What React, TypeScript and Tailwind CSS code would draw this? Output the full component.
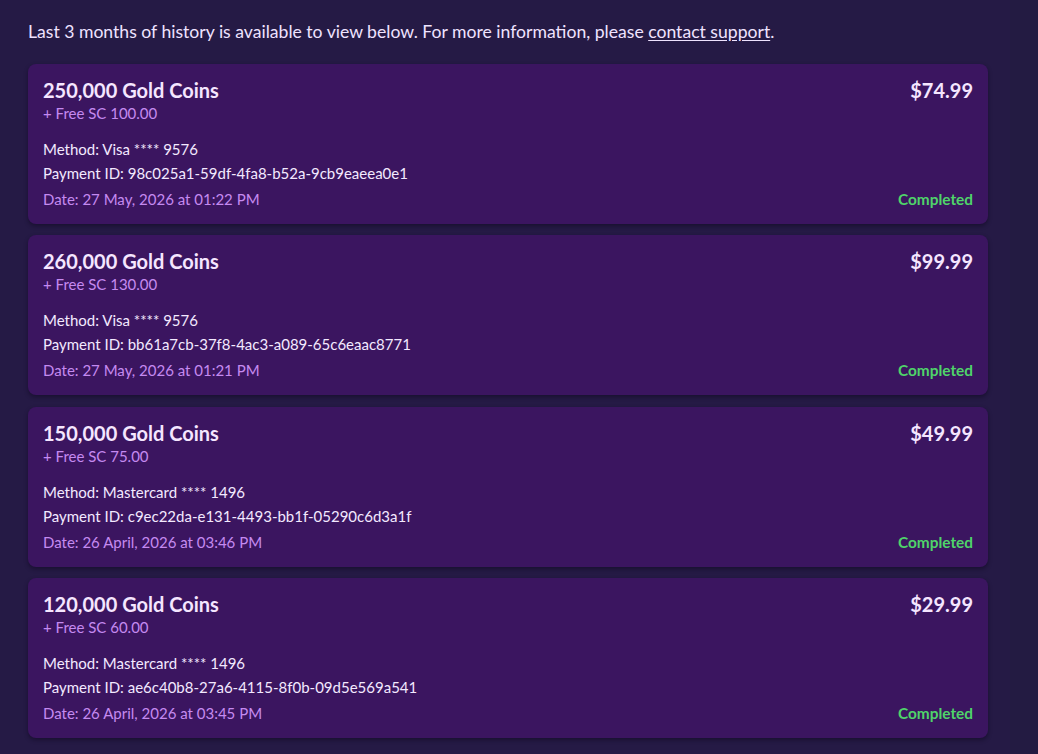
const purchases = [
	{
		coins: '250,000',
		sc: '100.00',
		price: '$74.99',
		method: 'Visa **** 9576',
		id: '98c025a1-59df-4fa8-b52a-9cb9eaeea0e1',
		date: '27 May, 2026 at 01:22 PM',
	},
	{
		coins: '260,000',
		sc: '130.00',
		price: '$99.99',
		method: 'Visa **** 9576',
		id: 'bb61a7cb-37f8-4ac3-a089-65c6eaac8771',
		date: '27 May, 2026 at 01:21 PM',
	},
	{
		coins: '150,000',
		sc: '75.00',
		price: '$49.99',
		method: 'Mastercard **** 1496',
		id: 'c9ec22da-e131-4493-bb1f-05290c6d3a1f',
		date: '26 April, 2026 at 03:46 PM',
	},
	{
		coins: '120,000',
		sc: '60.00',
		price: '$29.99',
		method: 'Mastercard **** 1496',
		id: 'ae6c40b8-27a6-4115-8f0b-09d5e569a541',
		date: '26 April, 2026 at 03:45 PM',
	},
];

function PurchaseCard({ p }: { p: (typeof purchases)[number] }) {
	return (
		<div className="h-[160px] rounded-lg bg-[#3b1560] px-[15px] pt-[14px] shadow-[0_2px_4px_rgba(10,5,25,0.45)]">
			<div className="flex items-start justify-between">
				<div>
					<h3 className="text-[20px] leading-6 font-bold text-[#f5e6ff]">{p.coins} Gold Coins</h3>
					<p className="mt-px text-[15px] leading-5 text-[#c58af0]">+ Free SC {p.sc}</p>
				</div>
				<span className="text-[20px] leading-6 font-bold text-[#f5e6ff]">{p.price}</span>
			</div>
			<div className="mt-[14px] text-[15px] text-[#f3e9ff]">
				<p className="leading-6">Method: {p.method}</p>
				<p className="leading-6">Payment ID: {p.id}</p>
				<div className="mt-[2px] flex h-6 items-center justify-between">
					<span className="leading-6 text-[#c58af0]">Date: {p.date}</span>
					<span className="text-[15.4px] leading-6 font-bold text-[#4fd46a]">Completed</span>
				</div>
			</div>
		</div>
	);
}

export default function App() {
	return (
		<div className="flex h-[754px] w-[1038px] overflow-hidden bg-[#251a45] font-['Lato','Noto_Sans',sans-serif]">
			<div className="w-[1010px] pl-[28px] pr-[22px] pt-[20px]">
				<p className="h-6 text-[17.6px] leading-6 text-[#efe3ff]">
					Last 3 months of history is available to view below. For more information, please{' '}
					<a href="#" className="underline underline-offset-2">contact support</a>.
				</p>
				<div className="mt-[20px] flex flex-col gap-[11.33px]">
					{purchases.map((p) => (
						<PurchaseCard key={p.id} p={p} />
					))}
				</div>
			</div>
			<div className="flex-1 bg-[#231b42]" />
		</div>
	);
}
